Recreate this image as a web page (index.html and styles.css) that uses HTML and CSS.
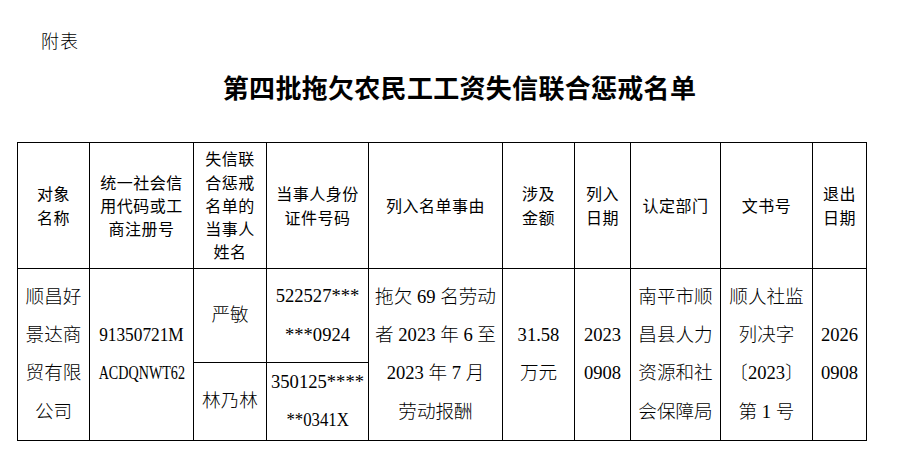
FILE: index.html
```html
<!DOCTYPE html>
<html lang="zh-CN">
<head>
<meta charset="utf-8">
<title>第四批拖欠农民工工资失信联合惩戒名单</title>
<link rel="stylesheet" href="styles.css">
</head>
<body>
<div class="page">
  <div class="note">附表</div>
  <h1 class="title">第四批拖欠农民工工资失信联合惩戒名单</h1>
  <table class="list">
    <colgroup>
      <col class="c1"><col class="c2"><col class="c3"><col class="c4"><col class="c5">
      <col class="c6"><col class="c7"><col class="c8"><col class="c9"><col class="c10">
    </colgroup>
    <tr class="head">
      <th>对象<br>名称</th>
      <th>统一社会信<br>用代码或工<br>商注册号</th>
      <th>失信联<br>合惩戒<br>名单的<br>当事人<br>姓名</th>
      <th>当事人身份<br>证件号码</th>
      <th>列入名单事由</th>
      <th>涉及<br>金额</th>
      <th>列入<br>日期</th>
      <th>认定部门</th>
      <th>文书号</th>
      <th>退出<br>日期</th>
    </tr>
    <tr class="r1">
      <td rowspan="2">顺昌好<br>景达商<br>贸有限<br>公司</td>
      <td rowspan="2"><span class="code code-a">91350721M</span><br><span class="code code-b">ACDQNWT62</span></td>
      <td>严敏</td>
      <td>522527***<br>***0924</td>
      <td rowspan="2">拖欠 69 名劳动<br>者 2023 年 6 至<br>2023 年 7 月<br>劳动报酬</td>
      <td rowspan="2">31.58<br>万元</td>
      <td rowspan="2">2023<br>0908</td>
      <td rowspan="2">南平市顺<br>昌县人力<br>资源和社<br>会保障局</td>
      <td rowspan="2">顺人社监<br>列决字<br>〔2023〕<br>第 1 号</td>
      <td rowspan="2">2026<br>0908</td>
    </tr>
    <tr class="r2">
      <td>林乃林</td>
      <td>350125****<br><span class="code code-c">**0341X</span></td>
    </tr>
  </table>
</div>
</body>
</html>
```
FILE: styles.css
```css
html, body {
  margin: 0;
  padding: 0;
  background: #fff;
  color: #000;
}
.page {
  padding: 30px 17px 0 17px;
}
.note {
  padding-left: 24px;
  height: 24px;
  line-height: 24px;
  font-family: "Liberation Serif", "Noto Sans CJK SC", serif;
  font-size: 18px;
  font-weight: 300;
  letter-spacing: 1px;
}
.title {
  margin: 15px 0 0 0;
  height: 36px;
  line-height: 36px;
  text-align: center;
  font-family: "Noto Sans CJK SC", sans-serif;
  font-size: 26px;
  font-weight: 700;
  letter-spacing: 0.3px;
}
.list {
  margin-top: 37px;
  width: 849px;
  table-layout: fixed;
  border-collapse: collapse;
}
.c1 { width: 72px; }
.c2 { width: 104px; }
.c3 { width: 73px; }
.c4 { width: 102px; }
.c5 { width: 134px; }
.c6 { width: 72px; }
.c7 { width: 56px; }
.c8 { width: 90px; }
.c9 { width: 92px; }
.c10 { width: 54px; }
.list th, .list td {
  border: 1px solid #000;
  padding: 0;
  text-align: center;
  vertical-align: middle;
  white-space: nowrap;
}
.list th {
  font-family: "Noto Sans CJK SC", sans-serif;
  font-size: 16px;
  font-weight: 400;
  line-height: 23.3px;
  letter-spacing: 0.5px;
}
.list td {
  font-family: "Liberation Serif", "Noto Sans CJK SC", serif;
  font-size: 18.6px;
  font-weight: 300;
  line-height: 38.3px;
}
.code {
  display: inline-block;
}
.code-a {
  transform: scaleX(0.93);
  margin: 0 -3px;
}
.code-b {
  transform: scaleX(0.76);
  margin: 0 -14px;
}
.code-c {
  transform: scaleX(0.9);
  margin: 0 -3px;
}
.head { height: 126px; }
.r1 { height: 94px; }
.r2 { height: 77px; }
```
